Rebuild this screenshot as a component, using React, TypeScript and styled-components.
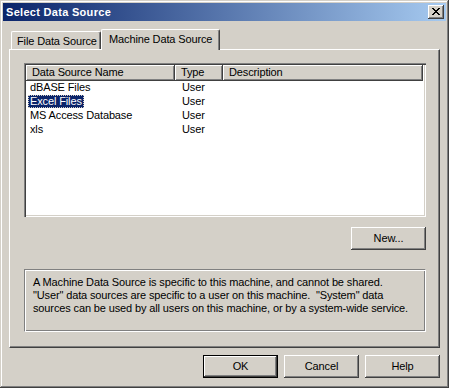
import React from 'react';
import styled, { createGlobalStyle } from 'styled-components';

const Global = createGlobalStyle`
  html, body { margin: 0; padding: 0; background: #D4D0C8; }
  body { font-family: "Liberation Sans", Arial, sans-serif; font-size: 11px; letter-spacing: -0.13px; color: #000; }
  * { box-sizing: border-box; }
`;

const raised = `
  box-shadow: inset -1px -1px #404040, inset 1px 1px #ffffff, inset -2px -2px #808080, inset 2px 2px #D4D0C8;
`;

const Window = styled.div`
  width: 449px;
  height: 388px;
  background: #D4D0C8;
  padding: 3px;
  box-shadow: inset -1px -1px #404040, inset 1px 1px #D4D0C8, inset -2px -2px #808080, inset 2px 2px #ffffff;
  display: flex;
  flex-direction: column;
`;

const TitleBar = styled.div`
  height: 18px;
  flex: none;
  background: linear-gradient(to right, #0A246A, #A6CAF0);
  display: flex;
  align-items: center;
  justify-content: space-between;
  padding: 0 2px 0 3px;
`;

const TitleText = styled.span`
  color: #fff;
  font-weight: bold;
  font-size: 11px;
  letter-spacing: 0.3px;
  line-height: 13px;
`;

const CloseButton = styled.div`
  width: 16px;
  height: 14px;
  background: #D4D0C8;
  ${raised}
  display: flex;
  align-items: center;
  justify-content: center;
  padding-bottom: 1px;
`;

const Body = styled.div`
  flex: 1;
  display: flex;
  flex-direction: column;
  padding: 8px 6px 0 6px;
`;

const TabRow = styled.div`
  height: 20px;
  display: flex;
  align-items: flex-end;
  padding-left: 2px;
`;

const Tab = styled.div<{ $active?: boolean; $w: number }>`
  position: relative;
  z-index: ${p => (p.$active ? 2 : 1)};
  width: ${p => p.$w}px;
  height: ${p => (p.$active ? 21 : 18)}px;
  margin-bottom: ${p => (p.$active ? -1 : 0)}px;
  background: #D4D0C8;
  border-top: 1px solid #fff;
  border-left: 1px solid #fff;
  border-right: 1px solid #404040;
  border-radius: 2px 2px 0 0;
  box-shadow: inset -1px 0 #808080;
  padding: ${p => (p.$active ? '3px 0 0 7px' : '3px 0 0 5px')};
  line-height: 13px;
  white-space: nowrap;
`;

const Panel = styled.div`
  width: 431px;
  height: 299px;
  border-top: 1px solid #fff;
  border-left: 1px solid #fff;
  border-right: 1px solid #404040;
  border-bottom: 1px solid #404040;
  box-shadow: inset -1px -1px #808080;
  padding: 13px 13px 0 14px;
  display: flex;
  flex-direction: column;
`;

const ListView = styled.div`
  height: 154px;
  background: #fff;
  padding: 2px;
  box-shadow: inset 1px 1px #808080, inset 2px 2px #404040, inset -1px -1px #ffffff, inset -2px -2px #D4D0C8;
  display: flex;
  flex-direction: column;
`;

const Header = styled.div`
  display: flex;
  height: 16px;
  flex: none;
`;

const HeaderCell = styled.div<{ $w: number }>`
  width: ${p => p.$w}px;
  flex: none;
  height: 16px;
  background: #D4D0C8;
  box-shadow: inset -1px -1px #404040, inset 1px 1px #ffffff, inset -2px -2px #808080;
  padding: 1px 0 0 6px;
  line-height: 13px;
  white-space: nowrap;
`;

const Row = styled.div`
  display: flex;
  height: 14px;
  line-height: 13px;
`;

const NameCell = styled.div`
  width: 149px;
  flex: none;
  padding-left: 2px;
`;

const TypeCell = styled.div`
  width: 48px;
  flex: none;
  padding-left: 7px;
`;

const Label = styled.span<{ $selected?: boolean }>`
  display: inline-block;
  height: 13px;
  padding: 0 2px;
  background: ${p => (p.$selected ? '#0A246A' : 'transparent')};
  color: ${p => (p.$selected ? '#fff' : '#000')};
  outline: ${p => (p.$selected ? '1px dotted #D4D0C8' : 'none')};
  outline-offset: -1px;
`;

const ButtonBar = styled.div<{ $mt: number }>`
  display: flex;
  justify-content: flex-end;
  gap: 6px;
  margin-top: ${p => p.$mt}px;
  flex: none;
`;

const Button = styled.div<{ $default?: boolean }>`
  width: 75px;
  height: 23px;
  background: #D4D0C8;
  display: flex;
  align-items: center;
  justify-content: center;
  line-height: 13px;
  ${p =>
    p.$default
      ? `box-shadow: inset 0 0 0 1px #000, inset -2px -2px #404040, inset 2px 2px #ffffff, inset -3px -3px #808080;`
      : `box-shadow: inset -1px -1px #404040, inset 1px 1px #ffffff, inset -2px -2px #808080;`}
`;

const DescBox = styled.div`
  margin-top: 19px;
  height: 63px;
  border-top: 1px solid #808080;
  border-left: 1px solid #808080;
  border-right: 1px solid #fff;
  border-bottom: 1px solid #fff;
  box-shadow: inset 1px 1px #fff, inset -1px -1px #808080;
  padding: 6px 0 0 8px;
  line-height: 13px;
`;

const rows = [
  { name: 'dBASE Files', type: 'User' },
  { name: 'Excel Files', type: 'User', selected: true },
  { name: 'MS Access Database', type: 'User' },
  { name: 'xls', type: 'User' },
];

const CloseGlyph = () => (
  <svg width="8" height="7" viewBox="0 0 8 7" shapeRendering="crispEdges">
    <g fill="#000">
      <rect x="0" y="0" width="2" height="1" />
      <rect x="6" y="0" width="2" height="1" />
      <rect x="1" y="1" width="2" height="1" />
      <rect x="5" y="1" width="2" height="1" />
      <rect x="2" y="2" width="4" height="1" />
      <rect x="3" y="3" width="2" height="1" />
      <rect x="2" y="4" width="4" height="1" />
      <rect x="1" y="5" width="2" height="1" />
      <rect x="5" y="5" width="2" height="1" />
      <rect x="0" y="6" width="2" height="1" />
      <rect x="6" y="6" width="2" height="1" />
    </g>
  </svg>
);

export default function App() {
  return (
    <>
      <Global />
      <Window>
        <TitleBar>
          <TitleText>Select Data Source</TitleText>
          <CloseButton>
            <CloseGlyph />
          </CloseButton>
        </TitleBar>
        <Body>
          <TabRow>
            <Tab $w={90}>File Data Source</Tab>
            <Tab $w={119} $active>Machine Data Source</Tab>
          </TabRow>
          <Panel>
            <ListView>
              <Header>
                <HeaderCell $w={149}>Data Source Name</HeaderCell>
                <HeaderCell $w={48}>Type</HeaderCell>
                <HeaderCell $w={200}>Description</HeaderCell>
              </Header>
              {rows.map(r => (
                <Row key={r.name}>
                  <NameCell>
                    <Label $selected={r.selected}>{r.name}</Label>
                  </NameCell>
                  <TypeCell>{r.type}</TypeCell>
                </Row>
              ))}
            </ListView>
            <ButtonBar $mt={10}>
              <Button>New...</Button>
            </ButtonBar>
            <DescBox>
              A Machine Data Source is specific to this machine, and cannot be shared.
              <br />
              "User" data sources are specific to a user on this machine.&nbsp; "System" data
              <br />
              sources can be used by all users on this machine, or by a system-wide service.
            </DescBox>
          </Panel>
          <ButtonBar $mt={7}>
            <Button $default>OK</Button>
            <Button>Cancel</Button>
            <Button>Help</Button>
          </ButtonBar>
        </Body>
      </Window>
    </>
  );
}
